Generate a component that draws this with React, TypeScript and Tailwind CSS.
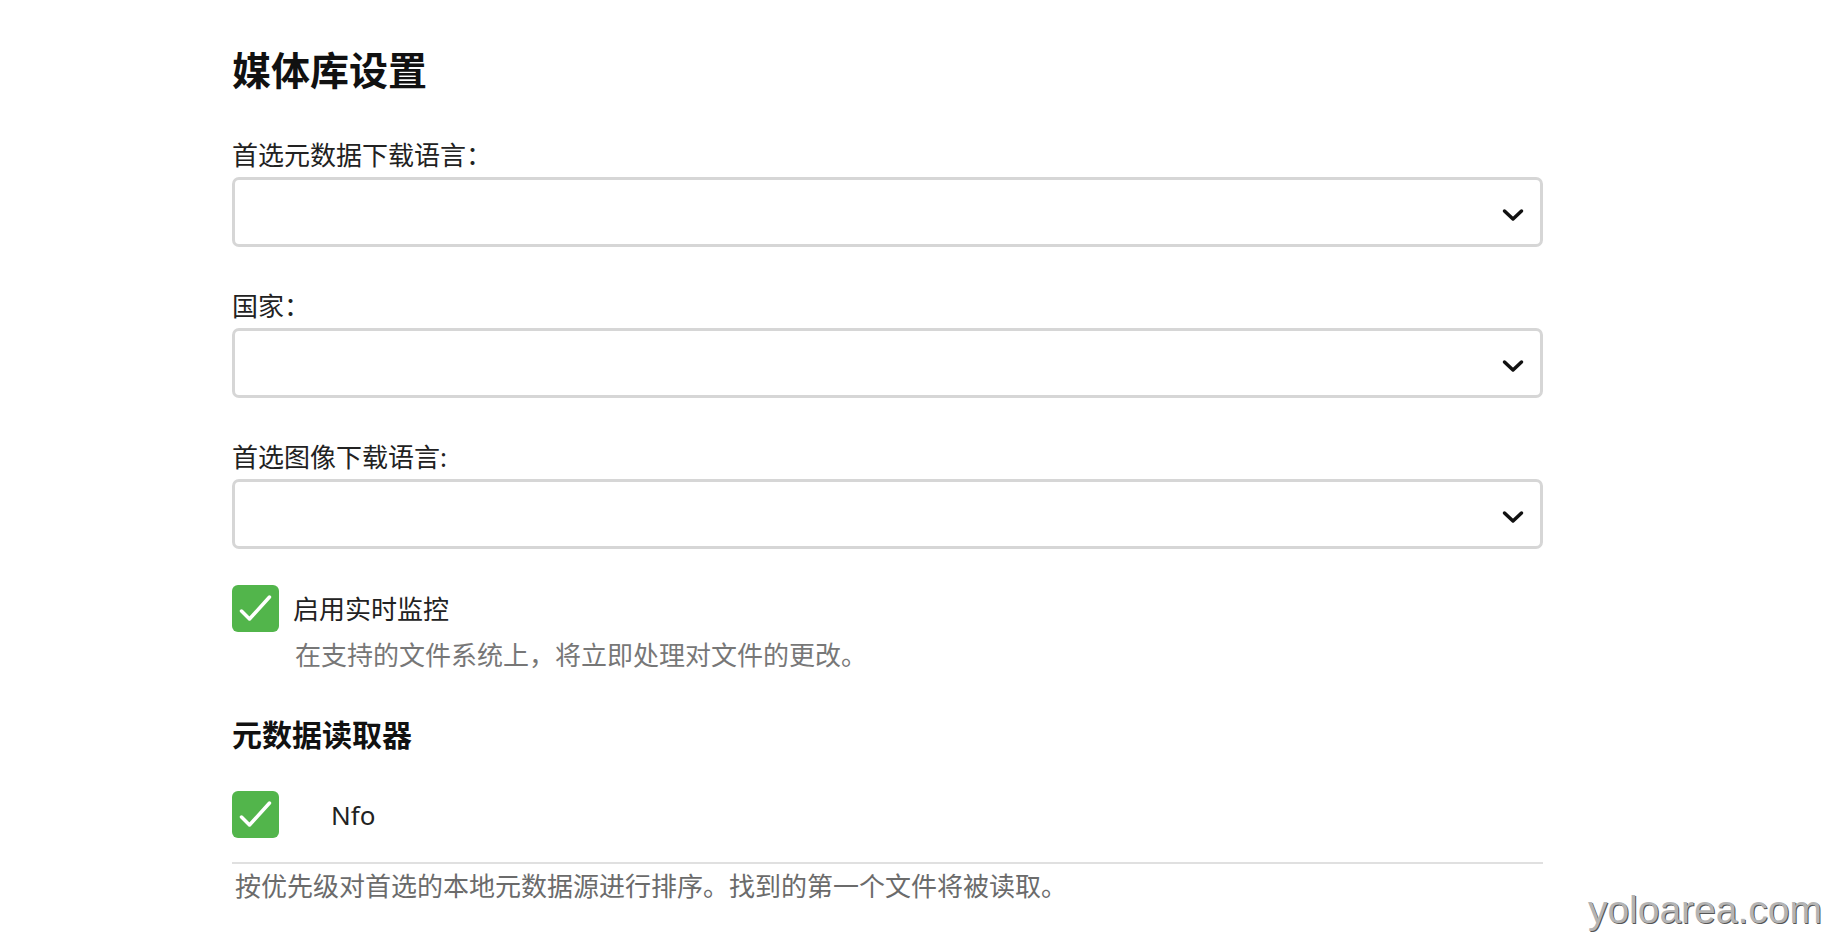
import React from 'react';

const font = { fontFamily: '"Noto Sans", "Noto Sans CJK SC", sans-serif' };

const Chevron = () => (
  <svg width="22" height="14" viewBox="0 0 22 14" fill="none" className="mt-[5px]">
    <polyline points="2.5,3 11,11 19.5,3" stroke="#111" strokeWidth="3.5" strokeLinecap="round" strokeLinejoin="round" />
  </svg>
);

const SelectBox = () => (
  <div className="mt-[6px] h-[70px] w-full border-[3px] border-[#d6d6d6] rounded-[7px] flex items-center justify-end pr-[16px] bg-white">
    <Chevron />
  </div>
);

const Checkbox = () => (
  <div className="w-[47px] h-[47px] shrink-0 rounded-[6px] bg-[#52b54b] flex items-center justify-center">
    <svg width="47" height="47" viewBox="0 0 47 47" fill="none">
      <polyline points="9.5,26 17.5,34 37.5,12" stroke="#fff" strokeWidth="3.5" strokeLinecap="round" strokeLinejoin="round" />
    </svg>
  </div>
);

const Field = ({ label }: { label: string }) => (
  <div className="flex flex-col">
    <label className="text-[26px] leading-[32px] text-[#222]">{label}</label>
    <SelectBox />
  </div>
);

export default function App() {
  return (
    <div className="relative min-h-screen bg-white" style={font}>
      <div className="pl-[232px] pt-[46px] w-[1543px]">
        <h1 className="text-[39px] leading-[48px] font-bold text-[#111]">媒体库设置</h1>

        <div className="mt-[45px] flex flex-col gap-[43px]">
          <Field label="首选元数据下载语言：" />
          <Field label="国家：" />
          <Field label="首选图像下载语言:" />
        </div>

        <div className="mt-[36px] flex items-center gap-[14px]">
          <Checkbox />
          <span className="text-[26px] leading-[32px] text-[#222]">启用实时监控</span>
        </div>
        <p className="mt-[7px] pl-[63px] text-[26px] leading-[32px] text-[#777]">
          在支持的文件系统上，将立即处理对文件的更改。
        </p>

        <h2 className="mt-[44px] text-[30px] leading-[40px] font-bold text-[#111]">元数据读取器</h2>

        <div className="mt-[36px] flex items-center">
          <Checkbox />
          <span className="ml-[52px] text-[26px] leading-[32px] text-[#222]">Nfo</span>
        </div>
        <div className="mt-[24px] border-t-2 border-[#e0e0e0]" />
        <p className="mt-[6px] pl-[3px] text-[26px] leading-[32px] text-[#6b6b6b]">
          按优先级对首选的本地元数据源进行排序。找到的第一个文件将被读取。
        </p>
      </div>

      <div
        className="absolute right-[14px] bottom-[10px] text-[39px] leading-[46px] text-[#b4b4b4] [text-shadow:1px_1px_0_#555]"
        style={{ fontFamily: '"Liberation Sans", Arial, sans-serif' }}
      >
        yoloarea.com
      </div>
    </div>
  );
}
